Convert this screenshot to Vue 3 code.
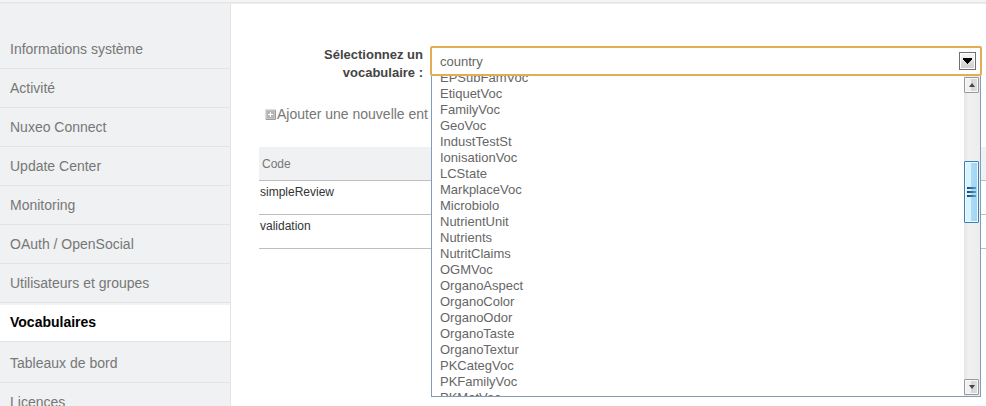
<script setup>
import { ref } from 'vue'

const menu = [
  'Informations système',
  'Activité',
  'Nuxeo Connect',
  'Update Center',
  'Monitoring',
  'OAuth / OpenSocial',
  'Utilisateurs et groupes',
  'Vocabulaires',
  'Tableaux de bord',
  'Licences',
]
const current = 'Vocabulaires'

const vocabularies = [
  'EPSubFamVoc', 'EtiquetVoc', 'FamilyVoc', 'GeoVoc', 'IndustTestSt',
  'IonisationVoc', 'LCState', 'MarkplaceVoc', 'Microbiolo', 'NutrientUnit',
  'Nutrients', 'NutritClaims', 'OGMVoc', 'OrganoAspect', 'OrganoColor',
  'OrganoOdor', 'OrganoTaste', 'OrganoTextur', 'PKCategVoc', 'PKFamilyVoc',
  'PKMatVoc',
]
const selected = ref('country')
const entries = ['simpleReview', 'validation']
</script>

<template>
  <div class="page">
    <header class="topbar"></header>
    <div class="columns">
      <nav class="sidebar">
        <ul class="menu">
          <li v-for="item in menu" :key="item" :class="{ active: item === current }">
            <a href="#">{{ item }}</a>
          </li>
        </ul>
      </nav>

      <main class="content">
        <div class="field">
          <label for="vocabulary">Sélectionnez un vocabulaire&nbsp;:</label>
          <div class="combo">
            <select id="vocabulary" v-model="selected">
              <option>country</option>
              <option v-for="v in vocabularies" :key="v">{{ v }}</option>
            </select>
            <svg class="combo-arrow" viewBox="0 0 17 18" width="17" height="18" aria-hidden="true">
              <defs>
                <linearGradient id="face" x1="0" y1="0" x2="0" y2="1">
                  <stop offset="0" stop-color="#f4f4f4" />
                  <stop offset=".5" stop-color="#ebebeb" />
                  <stop offset=".5" stop-color="#dddddd" />
                  <stop offset="1" stop-color="#cfcfcf" />
                </linearGradient>
              </defs>
              <rect x=".5" y=".5" width="16" height="17" fill="#fff" stroke="#707070" />
              <rect x="2" y="2" width="13" height="14" fill="url(#face)" />
              <path d="M4 6h9v2h-1v1h-1v1h-1v1H9v1H8v-1H7v-1H6V9H5V8H4z" fill="#000" />
            </svg>
            <div class="dropdown">
              <ul class="options" role="listbox">
                <li v-for="v in vocabularies" :key="v" role="option">{{ v }}</li>
              </ul>
              <div class="scrollbar">
                <button class="step" type="button" aria-label="Monter">
                  <svg viewBox="0 0 8 4" width="8" height="4"><path d="M4 0L7 4H1z" fill="#444" /></svg>
                </button>
                <div class="track">
                  <div class="thumb">
                    <i></i><i></i><i></i>
                  </div>
                </div>
                <button class="step" type="button" aria-label="Descendre">
                  <svg viewBox="0 0 8 4" width="8" height="4"><path d="M1 0H7L4 4z" fill="#444" /></svg>
                </button>
              </div>
            </div>
          </div>
        </div>

        <a class="add" href="#">
          <svg viewBox="0 0 11 11" width="11" height="11" aria-hidden="true">
            <rect width="11" height="11" rx="1" fill="#dcdcdc" />
            <path d="M10 1h1v9l-1 1H1v-1h9z" fill="#9d9d9d" />
            <rect x="1" y="1" width="9" height="9" fill="#c4c4c4" />
            <rect x="2" y="2" width="7" height="7" fill="#b4b4b4" />
            <path d="M5 3h1v2h2v1H6v2H5V6H3V5h2z" fill="#fff" />
          </svg>
          <span>Ajouter une nouvelle ent</span>
        </a>

        <table class="entries">
          <thead>
            <tr><th scope="col">Code</th></tr>
          </thead>
          <tbody>
            <tr v-for="e in entries" :key="e"><td>{{ e }}</td></tr>
          </tbody>
        </table>
      </main>
    </div>
  </div>
</template>

<style>
body {
  margin: 0;
  background: #fff;
}
</style>

<style scoped>
.page {
  display: flex;
  flex-direction: column;
  height: 100vh;
  overflow: hidden;
  font-family: "Liberation Sans", Arial, sans-serif;
  color: #444;
}
.topbar {
  flex: none;
  height: 2px;
  background: #f4f4f4;
  border-bottom: 1px solid #e3e3e3;
  box-shadow: 0 1px 0 #eee;
  margin-bottom: 1px;
}
.columns {
  flex: 1;
  min-height: 0;
  display: grid;
  grid-template-columns: 231px minmax(0, 1fr);
}
.sidebar {
  box-sizing: border-box;
  padding-top: 26px;
  background: #eff1f2;
  border-right: 1px solid #e3e4e5;
  overflow: hidden;
}
.menu,
.options {
  list-style: none;
  margin: 0;
  padding: 0;
}
.menu li {
  border-bottom: 1px solid #e2e3e4;
}
.menu a {
  display: block;
  padding: 0 10px;
  font-size: 14px;
  line-height: 38px;
  color: #777;
  text-decoration: none;
}
.menu .active {
  padding-bottom: 2px;
  background: #fff;
  border-top: 2px solid #f3f3f3;
}
.menu .active a {
  line-height: 34px;
  font-weight: bold;
  color: #000;
}
.menu .active + li {
  padding-top: 2px;
}
.content {
  padding: 42px 0 0 28px;
}
.field {
  display: grid;
  grid-template-columns: 164px minmax(0, 1fr);
  column-gap: 7px;
  margin-right: 4px;
  height: 38px;
}
.field label {
  font-size: 13px;
  line-height: 18px;
  font-weight: bold;
  text-align: right;
}
.combo {
  position: relative;
  height: 30px;
}
.combo select {
  box-sizing: border-box;
  display: block;
  width: 100%;
  height: 30px;
  margin: 0;
  padding: 0 32px 0 8px;
  appearance: none;
  background: #fff;
  border: 2px solid #e3ae52;
  border-radius: 2px;
  outline: none;
  font-family: inherit;
  font-size: 13px;
  color: #666;
}
.combo-arrow {
  position: absolute;
  top: 6px;
  right: 6px;
  pointer-events: none;
}
.dropdown {
  position: absolute;
  z-index: 1;
  top: 100%;
  left: 1px;
  right: 1px;
  box-sizing: border-box;
  height: 321px;
  display: flex;
  background: #fff;
  border: 1px solid #7f9db9;
  border-top-width: 0;
}
.options {
  flex: 1;
  overflow: hidden;
  padding-left: 8px;
  font-size: 13px;
  line-height: 16px;
  color: #666;
}
.options li:first-child {
  margin-top: -6px;
}
.scrollbar {
  display: flex;
  flex-direction: column;
  width: 16px;
  padding: 1px 0;
  background: linear-gradient(to right, #e6e6e6, #f0f0f0 30%, #ededed);
}
.step {
  display: flex;
  align-items: center;
  justify-content: center;
  flex: none;
  box-sizing: border-box;
  width: 15px;
  height: 16px;
  margin: 0;
  padding: 0;
  border: 1px solid #999;
  border-radius: 1px;
  box-shadow: inset 0 0 0 1px #f8f8f8;
  background: linear-gradient(to right, #f1f1f1 50%, #d6d6da 50%, #dedee0);
}
.track {
  flex: 1;
  padding-top: 68px;
}
.thumb {
  display: flex;
  flex-direction: column;
  align-items: center;
  justify-content: center;
  gap: 2px;
  box-sizing: border-box;
  width: 15px;
  height: 62px;
  border: 1px solid #3c7fb1;
  border-radius: 1px;
  box-shadow: inset 0 0 0 1px #eef9ff;
  background: linear-gradient(to right, #dcf2fd 45%, #aadcf6 45%, #9fd5f2);
}
.thumb i {
  width: 9px;
  height: 2px;
  background: linear-gradient(to right, #17446b, #5c9cc4);
}
.add {
  display: flex;
  align-items: center;
  gap: 1px;
  margin-top: 21px;
  padding-left: 6px;
  font-size: 14px;
  line-height: 18px;
  color: #777;
  text-decoration: none;
}
.entries {
  width: 100%;
  margin-top: 24px;
  border-collapse: separate;
  border-spacing: 0;
  font-size: 12px;
}
.entries th,
.entries td {
  box-sizing: border-box;
  height: 34px;
  border-bottom: 1px solid #bebebe;
  text-align: left;
  line-height: 16px;
}
.entries th {
  padding: 0 3px;
  background: #eff1f2;
  font-weight: normal;
  color: #777;
}
.entries td {
  padding: 3px 1px;
  vertical-align: top;
  color: #333;
}
</style>
